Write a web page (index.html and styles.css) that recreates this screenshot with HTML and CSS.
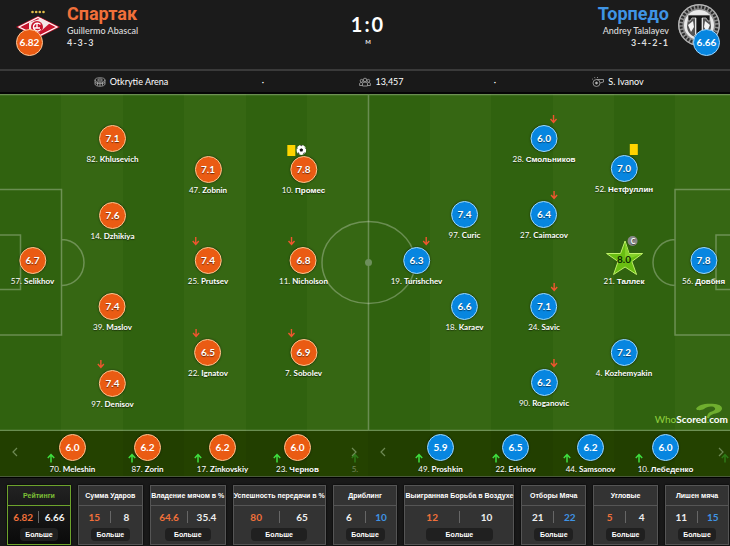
FILE: index.html
```html
<!DOCTYPE html>
<html lang="ru">
<head>
<meta charset="utf-8">
<meta name="viewport" content="width=device-width, initial-scale=1">
<title>Спартак 1:0 Торпедо</title>
<link rel="stylesheet" href="styles.css">
</head>
<body>
<svg class="defs" aria-hidden="true">
  <symbol id="down" viewBox="0 0 8 10"><path d="M4 1v7M1 5l3 3.500 3-3.500" fill="none" stroke="#f0552f" stroke-width="1.400"/></symbol>
  <symbol id="up" viewBox="0 0 8 10"><path d="M4 9.500V2M.8 5L4 1.500 7.200 5" fill="none" stroke="#3fe03f" stroke-width="1.500"/></symbol>
  <symbol id="ball" viewBox="0 0 10 10"><circle cx="5" cy="5" r="4.900" fill="#fff"/><path d="M5 3.200l1.800 1.300-.7 2.100H3.900l-.7-2.100zM3.600.3L5 1.200 6.400.3zM.1 4.300l1.200-.7.300-1.700zM9.900 4.300l-1.200-.7-.3-1.700zM1.700 8.400l.3-1.500 1.500 2.600zM8.300 8.400L8 6.900 6.500 9.500z" fill="#111"/></symbol>
  <symbol id="prev" viewBox="0 0 6 10"><path d="M5 1L1 5l4 4" fill="none" stroke="#6f8a54" stroke-width="1.200"/></symbol>
  <symbol id="next" viewBox="0 0 6 10"><path d="M1 1l4 4-4 4" fill="none" stroke="#6f8a54" stroke-width="1.200"/></symbol>
</svg>

<header class="head">
  <div class="team home">
    <div class="crest">
      <svg viewBox="0 0 46 46" aria-label="Спартак">
        <g fill="#e2bd4a"><circle cx="17.500" cy="8" r="1.300"/><circle cx="21.200" cy="8" r="1.300"/><circle cx="24.800" cy="8" r="1.300"/><circle cx="28.500" cy="8" r="1.300"/></g>
        <path d="M1 23L23 12l22 11-22 11z" fill="#c8142d"/>
        <path d="M4 23l19-9.500L42 23l-19 9.500z" fill="none" stroke="#fff" stroke-width="1.200"/>
        <path d="M14 18.500l12-4 9 4.500-14 12.500-7-3.500z" fill="#f3e6e6"/>
        <circle cx="22" cy="23" r="6" fill="#c8142d"/>
        <path d="M25.500 20.500a4 4 0 1 0 .2 4.800M19 24h6M22 19.500v5" fill="none" stroke="#fff" stroke-width="1.300"/>
      </svg>
      <span class="badge">6.82</span>
    </div>
    <div class="who"><h2>Спартак</h2><p>Guillermo Abascal</p><p class="form">4-3-3</p></div>
  </div>
  <div class="score"><strong>1:0</strong><span>м</span></div>
  <div class="team away">
    <div class="who"><h2>Торпедо</h2><p>Andrey Talalayev</p><p class="form">3-4-2-1</p></div>
    <div class="crest">
      <svg viewBox="0 0 46 46" aria-label="Торпедо">
        <circle cx="23" cy="21" r="21" fill="#8d8d8d"/>
        <circle cx="23" cy="21" r="18" fill="none" stroke="#2b2b2b" stroke-width="3" stroke-dasharray="2 1.500"/>
        <circle cx="23" cy="21" r="20.300" fill="none" stroke="#bdbdbd" stroke-width="1"/>
        <circle cx="23" cy="21" r="15" fill="#e9e9e9"/>
        <path d="M12 15c2-3 5-4 7-4v22c-5-2-8-6-8-11zM34 15c-2-3-5-4-7-4v22c5-2 8-6 8-11z" fill="#555"/>
        <path d="M12 21l5-4 1 6-3 5zM34 21l-5-4-1 6 3 5z" fill="#f4f4f4"/>
        <path d="M12 11h22v6h-2l-2-3h-4v16l2 2v2h-10v-2l2-2V14h-4l-2 3h-2z" fill="#161616" stroke="#ddd" stroke-width=".7"/>
      </svg>
      <span class="badge">6.66</span>
    </div>
  </div>
</header>

<section class="info">
  <span class="fact"><svg viewBox="0 0 12 10"><ellipse cx="6" cy="3" rx="5" ry="2.200"/><ellipse cx="6" cy="3" rx="2.500" ry="1"/><path d="M1 3v4c0 3 10 3 10 0V3M3.500 5v3.500M8.500 5v3.500M6 5.500V9M1 5.500c2 1.600 8 1.600 10 0"/></svg>Otkrytie Arena</span>
  <span>·</span>
  <span class="fact"><svg viewBox="0 0 12 10"><circle cx="6" cy="3" r="1.800"/><circle cx="2.600" cy="3.800" r="1.400"/><circle cx="9.400" cy="3.800" r="1.400"/><path d="M3.500 9V7c0-2.500 5-2.500 5 0v2zM3.200 8.500H.6V7c0-1.500 1.500-2 2.900-1M8.800 8.500h2.600V7c0-1.500-1.500-2-2.900-1"/></svg>13,457</span>
  <span>·</span>
  <span class="fact"><svg viewBox="0 0 12 10"><circle cx="4.500" cy="6" r="3.500"/><circle cx="4.500" cy="6" r="1" fill="#ccc"/><path d="M4.500 2.500h7v2.500L8 6M3 1.200L2.500.2M5.500 1V0M1 2.500l-.8-.6"/></svg>S. Ivanov</span>
</section>

<main class="pitch">
  <svg class="lines" viewBox="0 0 730 337" preserveAspectRatio="none" aria-hidden="true">
    <g fill="none" stroke="#fff" stroke-opacity=".28" stroke-width="1.500">
      <path d="M0 .5h730M0 336.500h730M368.500 0v337"/>
      <path d="M0 95.500h61.500v145.500H0M0 141h20.500v54.500H0M62 145.500a22 23 0 0 1 0 46"/>
      <path d="M730 95.500h-55v145.500h55M730 141h-14v54.500h14M675 145.500a22 23 0 0 0 0 46"/>
      <ellipse cx="368.500" cy="168.500" rx="46.500" ry="41"/>
    </g>
    <circle cx="368.500" cy="168.500" r="3.500" fill="#6d8f5c"/>
  </svg>

  <div class="player home" style="--x:32.5;--y:166"><b>6.7</b><p>57. <strong>Selikhov</strong></p></div>
  <div class="player home" style="--x:112.5;--y:44"><b>7.1</b><p>82. <strong>Khlusevich</strong></p></div>
  <div class="player home" style="--x:112.5;--y:121"><b>7.6</b><p>14. <strong>Dzhikiya</strong></p></div>
  <div class="player home" style="--x:112.5;--y:212"><b>7.4</b><p>39. <strong>Maslov</strong></p></div>
  <div class="player home" style="--x:112.5;--y:289"><span class="marks"><svg class="arrow"><use href="#down"/></svg></span><b>7.4</b><p>97. <strong>Denisov</strong></p></div>
  <div class="player home" style="--x:208;--y:75"><b>7.1</b><p>47. <strong>Zobnin</strong></p></div>
  <div class="player home" style="--x:208;--y:166"><span class="marks"><svg class="arrow"><use href="#down"/></svg></span><b>7.4</b><p>25. <strong>Prutsev</strong></p></div>
  <div class="player home" style="--x:208;--y:258"><span class="marks"><svg class="arrow"><use href="#down"/></svg></span><b>6.5</b><p>22. <strong>Ignatov</strong></p></div>
  <div class="player home" style="--x:303.5;--y:75"><span class="marks"><i class="card"></i><svg class="ball"><use href="#ball"/></svg></span><b>7.8</b><p>10. <strong class="cyr">Промес</strong></p></div>
  <div class="player home" style="--x:303.5;--y:166"><span class="marks"><svg class="arrow"><use href="#down"/></svg></span><b>6.8</b><p>11. <strong>Nicholson</strong></p></div>
  <div class="player home" style="--x:303.5;--y:258"><span class="marks"><svg class="arrow"><use href="#down"/></svg></span><b>6.9</b><p>7. <strong>Sobolev</strong></p></div>

  <div class="player away" style="--x:703.5;--y:166"><b>7.8</b><p>56. <strong class="cyr">Довбня</strong></p></div>
  <div class="player away" style="--x:624;--y:74"><span class="marks"><i class="card"></i></span><b>7.0</b><p>52. <strong class="cyr">Нетфуллин</strong></p></div>
  <div class="player away" style="--x:624;--y:166"><span class="marks captain"><i>C</i></span><b class="star"><svg viewBox="0 0 38 36"><path d="M19.500 1l4 12.500H37L26.300 21.500 31 34.500 19.500 27 8 34.500 12.500 21.500 1 13.500h14z" fill="#69bd12" stroke="#c0f06a" stroke-width="1"/><path d="M19.500 2l4 12H36L19.500 20z" fill="#85d12a"/></svg><span>8.0</span></b><p>21. <strong class="cyr">Таллек</strong></p></div>
  <div class="player away" style="--x:624;--y:258"><b>7.2</b><p>4. <strong>Kozhemyakin</strong></p></div>
  <div class="player away" style="--x:544;--y:44"><span class="marks"><svg class="arrow"><use href="#down"/></svg></span><b>6.0</b><p>28. <strong class="cyr">Смольников</strong></p></div>
  <div class="player away" style="--x:544;--y:120"><span class="marks"><svg class="arrow"><use href="#down"/></svg></span><b>6.4</b><p>27. <strong>Caimacov</strong></p></div>
  <div class="player away" style="--x:544;--y:212"><span class="marks"><svg class="arrow"><use href="#down"/></svg></span><b>7.1</b><p>24. <strong>Savic</strong></p></div>
  <div class="player away" style="--x:544;--y:288"><span class="marks"><svg class="arrow"><use href="#down"/></svg></span><b>6.2</b><p>90. <strong>Roganovic</strong></p></div>
  <div class="player away" style="--x:464.5;--y:120"><b>7.4</b><p>97. <strong>Curic</strong></p></div>
  <div class="player away" style="--x:464.5;--y:212"><b>6.6</b><p>18. <strong>Karaev</strong></p></div>
  <div class="player away" style="--x:416.5;--y:166"><span class="marks"><svg class="arrow"><use href="#down"/></svg></span><b>6.3</b><p>19. <strong>Turishchev</strong></p></div>

  <div class="brand">
    <svg viewBox="0 0 28 20" aria-hidden="true"><path d="M1 6C3 1 12 0 20 1c9 1 9 7 2 9-4 1.200-7 1.500-8 5h-2c0-5 3-6 6-7 3-.8 3-4-1-4.500-3-.3-6 .5-8 2.500C7 7 3 8 1 6z" fill="#6fae2e"/></svg>
    <span><em>Who</em>Scored<em>.</em>com</span>
  </div>
</main>

<section class="bench">
  <div class="subs home">
    <button aria-label="Назад"><svg><use href="#prev"/></svg></button>
    <ul>
      <li><b>6.0</b><p><svg class="arrow"><use href="#up"/></svg>70. <strong>Meleshin</strong></p></li>
      <li><b>6.2</b><p><svg class="arrow"><use href="#up"/></svg>87. <strong>Zorin</strong></p></li>
      <li><b>6.2</b><p><svg class="arrow"><use href="#up"/></svg>17. <strong>Zinkovskiy</strong></p></li>
      <li><b>6.0</b><p><svg class="arrow"><use href="#up"/></svg>23. <strong class="cyr">Чернов</strong></p></li>
    </ul>
    <button aria-label="Вперёд"><svg><use href="#next"/></svg><span class="peek"><svg class="arrow"><use href="#up"/></svg>5.</span></button>
  </div>
  <div class="subs away">
    <button aria-label="Назад"><svg><use href="#prev"/></svg></button>
    <ul>
      <li><b>5.9</b><p><svg class="arrow"><use href="#up"/></svg>49. <strong>Proshkin</strong></p></li>
      <li><b>6.5</b><p><svg class="arrow"><use href="#up"/></svg>22. <strong>Erkinov</strong></p></li>
      <li><b>6.2</b><p><svg class="arrow"><use href="#up"/></svg>44. <strong>Samsonov</strong></p></li>
      <li><b>6.0</b><p><svg class="arrow"><use href="#up"/></svg>10. <strong class="cyr">Лебеденко</strong></p></li>
    </ul>
    <button aria-label="Вперёд"><svg><use href="#next"/></svg><span class="peek"><svg class="arrow"><use href="#up"/></svg></span></button>
  </div>
</section>

<section class="stats">
  <article class="active"><h3>Рейтинги</h3><div><span class="h">6.82</span><span>6.66</span></div><button>Больше</button></article>
  <article><h3>Сумма Ударов</h3><div><span class="h">15</span><span>8</span></div><button>Больше</button></article>
  <article><h3>Владение мячом в %</h3><div><span class="h">64.6</span><span>35.4</span></div><button>Больше</button></article>
  <article><h3>Успешность передачи в %</h3><div><span class="h">80</span><span>65</span></div><button>Больше</button></article>
  <article><h3>Дриблинг</h3><div><span>6</span><span class="a">10</span></div><button>Больше</button></article>
  <article><h3>Выигранная Борьба в Воздухе</h3><div><span class="h">12</span><span>10</span></div><button>Больше</button></article>
  <article><h3>Отборы Мяча</h3><div><span>21</span><span class="a">22</span></div><button>Больше</button></article>
  <article><h3>Угловые</h3><div><span class="h">5</span><span>4</span></div><button>Больше</button></article>
  <article><h3>Лишен мяча</h3><div><span>11</span><span class="a">15</span></div><button>Больше</button></article>
</section>
</body>
</html>
```
FILE: styles.css
```css
* { box-sizing: border-box; margin: 0; padding: 0; }
body {
  background: #191919;
  color: #fff;
  font: 9px/12px Lato, "Liberation Sans", sans-serif;
  overflow-x: hidden;
}
button { font: inherit; color: inherit; border: 0; background: none; cursor: pointer; }
.defs { display: none; }
.cyr { font-family: "Liberation Sans", sans-serif; }

.head {
  display: grid;
  grid-template-columns: 1fr auto 1fr;
  height: 69px;
  background: #1b1b1b;
}
.team { display: flex; gap: 6px; padding: 4px 8px 0 15px; }
.team.away { justify-content: flex-end; gap: 7px; }
.away .who { text-align: right; }
.crest { position: relative; width: 46px; height: 46px; }
.crest svg { display: block; width: 46px; height: 46px; }
.badge {
  position: absolute;
  left: 1px;
  top: 25px;
  width: 27px;
  height: 27px;
  border: 1px solid #ffc79a;
  border-radius: 50%;
  background: #ea5b13;
  font: bold 10px/25px Lato, sans-serif;
  text-align: center;
}
.away .badge { left: 17px; background: #0786e0; border-color: #9fd6ff; }
.who { padding-top: 1px; color: #ddd; }
.who h2 { font: bold 18px/18px Roboto, sans-serif; margin-bottom: 2px; color: #f0703a; }
.away .who h2 { color: #3f94e4; }
.who p { font-weight: 500; }
.who .form { letter-spacing: 1px; font-weight: bold; }
.score { padding: 12px 0 0 6px; display: flex; flex-direction: column; align-items: center; }
.score strong { font-size: 20px; line-height: 24px; letter-spacing: 2px; }
.score span { font-size: 8px; line-height: 10px; }

.info {
  display: grid;
  grid-template-columns: 257fr 12fr 220fr 12fr 229fr;
  justify-items: center;
  align-items: center;
  height: 25px;
  border-top: 2px solid #3a3a3a;
  border-bottom: 2px solid #050505;
}
.fact { display: flex; align-items: center; gap: 4px; padding-left: 5px; }
.fact svg { width: 12px; height: 10px; fill: none; stroke: #aaa; stroke-width: .8; }

.pitch {
  position: relative;
  aspect-ratio: 730 / 337;
  background: repeating-linear-gradient(90deg, #30620f 0 8.41%, #366713 8.41% 16.82%);
}
.lines { display: block; width: 100%; height: 100%; }
.player {
  position: absolute;
  left: calc(var(--x) / 730 * 100%);
  top: calc(var(--y) / 337 * 100%);
  display: flex;
  flex-direction: column;
  align-items: center;
  gap: 1px;
  transform: translate(-50%, -13px);
  white-space: nowrap;
  text-shadow: 0 1px 1px #0008;
}
.player p, .subs p { font-size: 8px; }
.player b, .subs b {
  display: block;
  width: 27px;
  height: 27px;
  border: 1px solid #ffc98f;
  border-radius: 50%;
  background: #ea5b13;
  box-shadow: 0 0 2px #0009;
  font-size: 10px;
  line-height: 25px;
  text-align: center;
}
.player.away b, .subs.away b { background: #0786e0; border-color: #9fdcff; }
.player.away b.star { position: relative; background: none; border: 0; box-shadow: none; color: #0c2a00; text-shadow: none; }
.star svg { position: absolute; left: -5px; top: -7px; width: 38px; height: 36px; }
.star span { position: relative; }
.marks {
  position: absolute;
  left: 50%;
  top: -11px;
  display: flex;
  gap: 1px;
  margin-left: -16px;
}
.away .marks { left: auto; right: 50%; margin: 0 -14px 0 0; }
.arrow { width: 8px; height: 10px; }
.ball { width: 10px; height: 10px; }
.card { width: 8px; height: 11px; background: #ffd400; }
.captain { z-index: 1; }
.captain i {
  width: 10px;
  height: 10px;
  border-radius: 50%;
  background: #888;
  font: bold 7px/10px Lato, sans-serif;
  text-align: center;
}
.brand { position: absolute; right: 2px; bottom: 6px; font-size: 10px; font-weight: bold; }
.brand svg { position: absolute; right: 5px; bottom: 2px; width: 28px; height: 20px; }
.brand span { position: relative; }
.brand em { font-style: normal; font-weight: normal; color: #8fd03e; }

.bench {
  display: grid;
  grid-template-columns: 368fr 362fr;
  height: 46px;
  border-bottom: 1px solid #4a5a3a;
  background: repeating-linear-gradient(90deg, #223f00 0 8.41%, #244200 8.41% 16.82%);
}
.subs { display: flex; padding-right: 3px; }
.subs.away { padding-right: 0; }
.subs ul { display: flex; flex: 1; list-style: none; }
.subs li { flex: 1; display: flex; flex-direction: column; align-items: center; padding-top: 3px; }
.subs p { position: relative; white-space: nowrap; margin-top: 2px; text-shadow: 0 1px 1px #0008; }
.subs p .arrow { position: absolute; left: -3px; top: -10px; }
.subs button { position: relative; width: 30px; }
.subs button:first-child { width: 35px; padding-right: 5px; }
.subs.home button:last-child { padding-left: 8px; }
.subs.away button:last-child { padding-left: 9px; width: 27px; }
.subs button > svg { width: 6px; height: 10px; }
.peek { position: absolute; right: 6px; bottom: 1px; opacity: .35; display: flex; flex-direction: column; align-items: center; font-size: 8px; }
.subs.away .peek { right: 1px; bottom: 13px; }

.stats {
  display: grid;
  grid-template-columns: 64fr 65fr 76fr 93fr 65fr 110fr 65fr 65fr 64fr;
  gap: 7px;
  padding: 7px 1px 2px 7px;
  border-top: 1px solid #000;
}
.stats article {
  display: flex;
  flex-direction: column;
  align-items: center;
  height: 60px;
  min-width: 0;
  border: 1px solid #555;
  background: #333;
  box-shadow: 0 0 2px #000;
}
.stats h3 {
  align-self: stretch;
  border-bottom: 1px solid #555;
  font: bold 7px/19px "Liberation Sans", sans-serif;
  text-align: center;
  white-space: nowrap;
}
.stats div { display: flex; align-self: stretch; margin: 5px 0; }
.stats div span { flex: 1; text-align: center; font-weight: bold; font-size: 10px; line-height: 12px; color: #eee; }
.stats div span + span { border-left: 1px solid #666; }
.stats div .h { color: #f0703a; }
.stats div .a { color: #3f94e4; }
.stats button {
  width: 62%;
  height: 13px;
  border-radius: 4px;
  background: #202020;
  font: bold 7px/13px "Liberation Sans", sans-serif;
}
.stats .active { border-color: #6da32c; background: linear-gradient(#222, #0a0a0a); }
.stats .active h3 { color: #7dc036; border-color: #6da32c; }
```
